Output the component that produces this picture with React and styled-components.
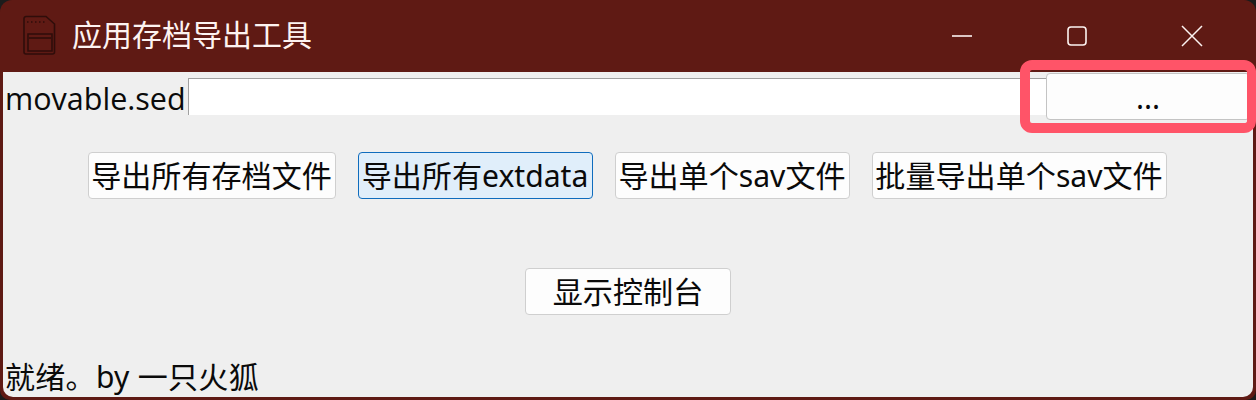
import React from "react";
import styled, { createGlobalStyle } from "styled-components";

const Global = createGlobalStyle`
  html, body { margin: 0; padding: 0; background: #1c1c1c; }
  body { width: 1256px; height: 400px; overflow: hidden; font-family: "Noto Sans CJK SC", "Liberation Sans", sans-serif; }
`;
const Window = styled.div`
  position: relative;
  width: 1256px;
  height: 400px;
  box-sizing: border-box;
  background: #5f1a14;
  border-radius: 12px 12px 10px 10px;
  padding: 0 3px 3px;
  display: flex;
  flex-direction: column;
`;
const TitleBar = styled.div`
  height: 72px;
  flex: none;
  display: flex;
  align-items: center;
  color: #fdf3f1;
`;
const AppIcon = styled.svg`
  width: 34px;
  height: 42px;
  margin-left: 19px;
  flex: none;
`;
const Title = styled.div`
  margin-left: 16px;
  font-size: 30px;
  line-height: 1;
  padding-bottom: 6px;
  flex: 1;
`;
const WinControls = styled.div`
  display: flex;
  align-items: center;
  margin-right: 4px;
`;
const WinButton = styled.div`
  width: 115px;
  height: 44px;
  display: flex;
  align-items: center;
  justify-content: center;
  svg { display: block; }
`;
const Content = styled.div`
  flex: 1;
  background: #efefef;
  border-radius: 0 0 10px 10px;
  display: flex;
  flex-direction: column;
  color: #0a0a0a;
  font-family: "Noto Sans", "Noto Sans CJK SC", sans-serif;
  font-size: 30px;
`;
const FileRow = styled.div`
  display: flex;
  align-items: flex-start;
  height: 48px;
  flex: none;
  padding: 1px 3px 0 2px;
  box-sizing: border-box;
`;
const Label = styled.div`
  width: 183px;
  font-family: "Open Sans", "Noto Sans", sans-serif;
  font-size: 30.500px;
  line-height: 50px;
  height: 48px;
  flex: none;
`;
const PathInput = styled.div`
  width: 858px;
  height: 37px;
  margin-top: 5px;
  flex: none;
  box-sizing: border-box;
  background: #fff;
  border-top: 1px solid #a0a0a0;
  border-left: 1px solid #a0a0a0;
`;
const BrowseButton = styled.div`
  flex: 1;
  height: 47px;
  box-sizing: border-box;
  background: #fdfdfd;
  border: 1px solid #c4c4c4;
  border-radius: 4px;
  display: flex;
  align-items: center;
  justify-content: center;
  font-size: 30px;
  line-height: 1;
  padding-top: 2px;
`;
const ActionRow = styled.div`
  display: flex;
  justify-content: center;
  gap: 22px;
  margin-top: 32px;
  padding-right: 2px;
`;
const ActionButton = styled.div`
  height: 47px;
  box-sizing: border-box;
  width: ${p => p.$w}px;
  padding-top: 1px;
  background: ${p => (p.$active ? "#e0eefa" : "#fdfdfd")};
  border: 1px solid ${p => (p.$active ? "#0f6cbd" : "#cfcfcf")};
  border-radius: 4px;
  display: flex;
  align-items: center;
  justify-content: center;
  white-space: nowrap;
  font-size: 30.100px;
  line-height: 1;
`;
const ConsoleRow = styled.div`
  display: flex;
  justify-content: center;
  margin-top: 69px;
`;
const Status = styled.div`
  margin-top: auto;
  padding-left: 2px;
  font-size: 30px;
  letter-spacing: 0.3px;
  line-height: 40px;
  height: 40px;
  white-space: nowrap;
`;
const Highlight = styled.div`
  position: absolute;
  left: 1020px;
  top: 60px;
  width: 236px;
  height: 73px;
  box-sizing: border-box;
  border: 10px solid #ff5468;
  border-right-width: 9px;
  border-radius: 12px;
`;

export default function App() {
  return (
    <>
      <Global />
      <Window>
        <TitleBar>
          <AppIcon viewBox="0 0 34 42" fill="none" stroke="#2f0d0a" strokeWidth="1.6">
            <path d="M2 3.500 a2 2 0 0 1 2 -2 H24 L32.500 9 V37 a2 2 0 0 1 -2 2 H4 a2 2 0 0 1 -2 -2 Z" />
            <path d="M5 7 H7 M9 7 H11 M13 7 H15 M17 7 H19 M21 7 H23" strokeDasharray="1.500 1" />
            <path d="M6 36 V19 H30 V36 Z" />
            <path d="M7 23 H29" />
          </AppIcon>
          <Title>应用存档导出工具</Title>
          <WinControls>
            <WinButton>
              <svg width="22" height="22" viewBox="0 0 22 22"><path d="M1 11 H21" stroke="#fdf3f1" strokeWidth="1.6" /></svg>
            </WinButton>
            <WinButton>
              <svg width="22" height="22" viewBox="0 0 22 22"><rect x="2" y="2" width="18" height="18" rx="3" fill="none" stroke="#fdf3f1" strokeWidth="1.6" /></svg>
            </WinButton>
            <WinButton>
              <svg width="22" height="22" viewBox="0 0 22 22"><path d="M1 1 L21 21 M21 1 L1 21" stroke="#fdf3f1" strokeWidth="1.5" /></svg>
            </WinButton>
          </WinControls>
        </TitleBar>
        <Content>
          <FileRow>
            <Label>movable.sed</Label>
            <PathInput />
            <BrowseButton>...</BrowseButton>
          </FileRow>
          <ActionRow>
            <ActionButton $w={248}>导出所有存档文件</ActionButton>
            <ActionButton $w={235} $active>导出所有extdata</ActionButton>
            <ActionButton $w={235}>导出单个sav文件</ActionButton>
            <ActionButton $w={295}>批量导出单个sav文件</ActionButton>
          </ActionRow>
          <ConsoleRow>
            <ActionButton $w={206}>显示控制台</ActionButton>
          </ConsoleRow>
          <Status>就绪。by 一只火狐</Status>
        </Content>
        <Highlight />
      </Window>
    </>
  );
}
